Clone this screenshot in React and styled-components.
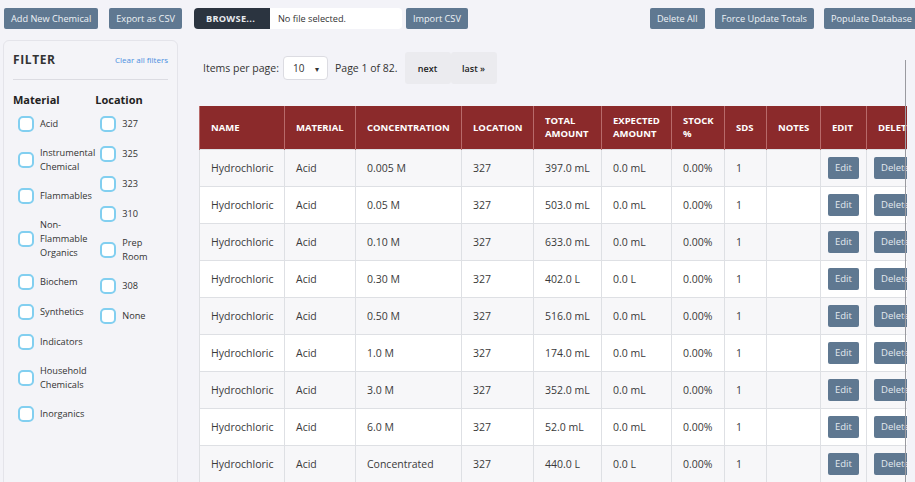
import { createGlobalStyle, styled } from 'styled-components';

const GlobalStyle = createGlobalStyle`
  html, body {
    margin: 0;
    padding: 0;
    background: #f3f3f8;
    font-family: "Open Sans", "Noto Sans", sans-serif;
    color: #333;
    overflow: hidden;
  }
  * { box-sizing: border-box; }
`;

const materials = [
  'Acid',
  'Instrumental Chemical',
  'Flammables',
  'Non-Flammable Organics',
  'Biochem',
  'Synthetics',
  'Indicators',
  'Household Chemicals',
  'Inorganics',
];

const locations = ['327', '325', '323', '310', 'Prep Room', '308', 'None'];

const rows = [
  ['0.005 M', '397.0 mL', '0.0 mL'],
  ['0.05 M', '503.0 mL', '0.0 mL'],
  ['0.10 M', '633.0 mL', '0.0 mL'],
  ['0.30 M', '402.0 L', '0.0 L'],
  ['0.50 M', '516.0 mL', '0.0 mL'],
  ['1.0 M', '174.0 mL', '0.0 mL'],
  ['3.0 M', '352.0 mL', '0.0 mL'],
  ['6.0 M', '52.0 mL', '0.0 mL'],
  ['Concentrated', '440.0 L', '0.0 L'],
];

const columns = [
  ['Name', 85],
  ['Material', 71],
  ['Concentration', 106],
  ['Location', 72],
  ['Total Amount', 68],
  ['Expected Amount', 70],
  ['Stock %', 53],
  ['SDS', 42],
  ['Notes', 54],
  ['Edit', 46],
  ['Delete', 70],
];

const App = () => {
  return (
    <Page>
      <GlobalStyle />
      <Toolbar>
        <Group>
          <Button>Add New Chemical</Button>
          <Button $ml={11}>Export as CSV</Button>
          <FileInput>
            <span className="browse">BROWSE...</span>
            <span className="name">No file selected.</span>
          </FileInput>
          <Button $ml={4}>Import CSV</Button>
        </Group>
        <Group $gap={10}>
          <Button>Delete All</Button>
          <Button>Force Update Totals</Button>
          <Button>Populate Database</Button>
        </Group>
      </Toolbar>

      <Content>
        <Sidebar>
          <SideHead>
            <h2>FILTER</h2>
            <a>Clear all filters</a>
          </SideHead>
          <Columns>
            <FilterCol $width={84}>
              <h3>Material</h3>
              {materials.map((m) => (
                <Check key={m}>
                  <Box />
                  <span>{m}</span>
                </Check>
              ))}
            </FilterCol>
            <FilterCol $width={80}>
              <h3>Location</h3>
              {locations.map((l) => (
                <Check key={l}>
                  <Box />
                  <span>{l}</span>
                </Check>
              ))}
            </FilterCol>
          </Columns>
        </Sidebar>

        <Main>
          <Pager>
            <span>Items per page:</span>
            <Select>
              <span>10</span>
              <i>▾</i>
            </Select>
            <span>Page 1 of 82.</span>
            <PageLinks>
              <PageLink>next</PageLink>
              <PageLink>last »</PageLink>
            </PageLinks>
          </Pager>
          <Table>
            <colgroup>
              {columns.map(([c, w]) => (
                <col key={c} style={{ width: w }} />
              ))}
            </colgroup>
            <thead>
              <tr>
                {columns.map(([c]) => (
                  <th key={c}>{c}</th>
                ))}
              </tr>
            </thead>
            <tbody>
              {rows.map(([conc, total, expected]) => (
                <tr key={conc}>
                  <td>Hydrochloric</td>
                  <td>Acid</td>
                  <td>{conc}</td>
                  <td>327</td>
                  <td>{total}</td>
                  <td>{expected}</td>
                  <td>0.00%</td>
                  <td>1</td>
                  <td></td>
                  <td><SmallButton>Edit</SmallButton></td>
                  <td><SmallButton>Delete</SmallButton></td>
                </tr>
              ))}
            </tbody>
          </Table>
          <ScrollEdge />
        </Main>
      </Content>
    </Page>
  );
};

const Page = styled.div`
  width: 915px;
  height: 482px;
  overflow: hidden;
`;

const Toolbar = styled.div`
  display: flex;
  justify-content: space-between;
  padding: 8px 0 0 4px;
  margin-right: -4px;
`;

const Group = styled.div`
  display: flex;
  align-items: center;
  gap: ${(p) => p.$gap || 0}px;
`;

const Button = styled.button`
  height: 21px;
  padding: 0 7px;
  margin-left: ${(p) => p.$ml || 0}px;
  border: none;
  border-radius: 2px;
  background: #5f7891;
  color: #eef2f6;
  font-family: inherit;
  font-size: 9.2px;
  white-space: nowrap;
`;

const FileInput = styled.div`
  display: flex;
  width: 208px;
  height: 21px;
  margin-left: 12px;
  border-radius: 4px;
  overflow: hidden;
  background: #fff;
  font-size: 9.2px;
  .browse {
    width: 76px;
    display: flex;
    align-items: center;
    padding-left: 12px;
    background: #2b3440;
    color: #e8ebef;
    font-weight: 700;
    letter-spacing: 0.3px;
  }
  .name {
    display: flex;
    align-items: center;
    padding-left: 8px;
    color: #333;
  }
`;

const Content = styled.div`
  display: flex;
  margin-top: 11px;
`;

const Sidebar = styled.aside`
  width: 175px;
  height: 460px;
  margin-left: 3px;
  padding: 10px 9px 0 9px;
  border: 1px solid #e4e4ea;
  border-radius: 6px;
  background: #f4f4f8;
  flex-shrink: 0;
`;

const SideHead = styled.div`
  display: flex;
  justify-content: space-between;
  align-items: center;
  padding-bottom: 11px;
  border-bottom: 1px solid #dcdce2;
  h2 {
    margin: 0;
    font-size: 12px;
    font-weight: 700;
    letter-spacing: 0.6px;
    color: #333;
  }
  a {
    font-size: 8px;
    color: #4a8fe0;
  }
`;

const Columns = styled.div`
  display: flex;
  padding-top: 12px;
`;

const FilterCol = styled.div`
  width: ${(p) => p.$width}px;
  display: flex;
  flex-direction: column;
  h3 {
    margin: 0 0 2px 0;
    font-size: 11px;
    font-weight: 700;
    color: #222;
  }
`;

const Check = styled.label`
  display: flex;
  align-items: center;
  gap: 6px;
  min-height: 30px;
  padding: 7px 0 7px 5px;
  font-size: 9.2px;
  line-height: 14px;
  color: #333;
  span {
    max-width: 58px;
  }
`;

const Box = styled.span`
  width: 16px;
  height: 16px;
  flex-shrink: 0;
  border: 2px solid #82cff0;
  border-radius: 5px;
  background: #fff;
`;

const Main = styled.main`
  position: relative;
  width: 729px;
  overflow: hidden;
  padding: 12px 0 0 21px;
`;

const Pager = styled.div`
  display: flex;
  align-items: center;
  height: 32px;
  padding-left: 4px;
  font-size: 10.5px;
  color: #333;
`;

const Select = styled.div`
  display: flex;
  align-items: center;
  justify-content: space-between;
  width: 45px;
  height: 24px;
  margin: 0 7px 0 4px;
  padding: 0 8px 0 9px;
  background: #fff;
  border: 1px solid #dcdce2;
  border-radius: 4px;
  font-size: 10px;
  i {
    font-style: normal;
    font-size: 8px;
  }
`;

const PageLinks = styled.div`
  display: flex;
  margin-left: 7px;
`;

const PageLink = styled.span`
  width: 46px;
  height: 32px;
  display: flex;
  align-items: center;
  justify-content: center;
  background: #ebebef;
  border-radius: 3px;
  font-size: 9px;
  font-weight: 600;
  color: #222;
`;

const Table = styled.table`
  margin-top: 22px;
  border-collapse: collapse;
  table-layout: fixed;
  width: 737px;
  font-size: 10.5px;
  th {
    height: 43px;
    padding: 0 11px;
    background: #8b2a2b;
    color: #fff;
    text-align: left;
    text-transform: uppercase;
    font-size: 9.5px;
    font-weight: 700;
    line-height: 13px;
    border-left: 1px solid #b86a6a;
    white-space: normal;
  }
  td {
    height: 37px;
    padding: 0 11px;
    border: 1px solid #dee0e4;
    color: #3a3a3a;
    white-space: nowrap;
    overflow: hidden;
  }
  tbody tr:nth-child(odd) td {
    background: #f7f7f9;
  }
  tbody tr:nth-child(even) td {
    background: #fff;
  }
  td:last-child,
  td:nth-child(10) {
    padding-left: 7px;
  }
`;

const SmallButton = styled.span`
  display: inline-flex;
  align-items: center;
  padding: 0 7px;
  height: 22px;
  background: #5f7891;
  border-radius: 2px;
  color: #e4eaf0;
  font-size: 9.5px;
`;

const ScrollEdge = styled.div`
  position: absolute;
  right: 1px;
  top: 20px;
  bottom: 0;
  width: 1.5px;
  background: #9a9aa0;
`;

export default App;
